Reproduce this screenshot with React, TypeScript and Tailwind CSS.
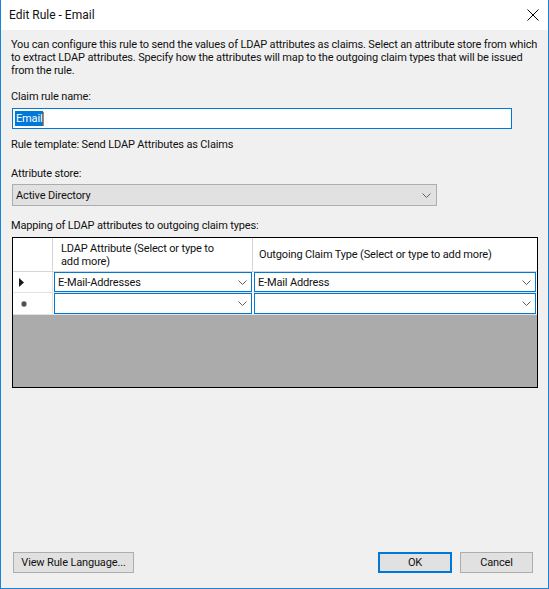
import React from 'react';

const Chevron = () => (
  <svg width="9" height="5" viewBox="0 0 9 5" className="shrink-0">
    <path d="M0.5 0.5 L4.5 4.5 L8.5 0.5" fill="none" stroke="#5f5f5f" strokeWidth="1" />
  </svg>
);

const ComboCell = ({ value }: { value: string }) => (
  <div className="w-full h-full border border-[#0078d7] bg-white flex items-center justify-between pl-[3px] pr-[4px]">
    <span>{value}</span>
    <Chevron />
  </div>
);

const Button = ({ label, primary, width }: { label: string; primary?: boolean; width: string }) => (
  <button
    className={`${width} h-[21px] bg-[#e1e1e1] flex items-center justify-center whitespace-nowrap ${
      primary ? 'border-2 border-[#0078d7]' : 'border border-[#adadad]'
    }`}
  >
    {label}
  </button>
);

export default function App() {
  return (
    <div
      className="w-[549px] h-[589px] bg-[#f0f0f0] border-x border-b border-[#1883d7] flex flex-col text-[11px] leading-[13px] tracking-[-0.15px] text-[#111]"
      style={{ fontFamily: 'Roboto, "Liberation Sans", Arial, sans-serif' }}
    >
      {/* Title bar */}
      <div className="h-[30px] bg-white flex items-center justify-between pl-[8px] pr-[9px] shrink-0">
        <span className="text-[12px] tracking-normal">Edit Rule - Email</span>
        <svg width="12" height="12" viewBox="0 0 12 12">
          <path d="M0.5 0.5 L11.5 11.5 M11.5 0.5 L0.5 11.5" stroke="#000" strokeWidth="1" />
        </svg>
      </div>

      <div className="flex flex-col flex-1 pl-[10px] pr-[10px]">
        <p className="mt-[8px] whitespace-nowrap">
          You can configure this rule to send the values of LDAP attributes as claims. Select an attribute store from which
          <br />
          to extract LDAP attributes. Specify how the attributes will map to the outgoing claim types that will be issued
          <br />
          from the rule.
        </p>

        <label className="mt-[13px]">Claim rule name:</label>
        <div className="mt-[5px] ml-[1px] w-[500px] h-[21px] border border-[#0078d7] bg-white flex items-center pl-[2px]">
          <span className="bg-[#0078d7] text-white px-px leading-[15px]">Email</span>
          <span className="w-px h-[14px] bg-[#e07a1f]" />
        </div>

        <p className="mt-[9px]">Rule template: Send LDAP Attributes as Claims</p>

        <label className="mt-[16px]">Attribute store:</label>
        <div className="mt-[4px] ml-[1px] w-[425px] h-[22px] border border-[#adadad] bg-[#e1e1e1] flex items-center justify-between pl-[3px] pr-[5px]">
          <span>Active Directory</span>
          <Chevron />
        </div>

        <label className="mt-[13px]">Mapping of LDAP attributes to outgoing claim types:</label>
        <div className="mt-[5px] ml-[1px] w-[526px] h-[151px] border border-black bg-[#ababab] flex flex-col">
          {/* header */}
          <div className="flex h-[34px] bg-white border-b border-[#d5d5d5]">
            <div className="w-[40px] border-r border-[#d5d5d5]" />
            <div className="w-[200px] border-r border-[#d5d5d5] pl-[8px] pt-[4px]">
              LDAP Attribute (Select or type to
              <br />
              add more)
            </div>
            <div className="flex-1 pl-[6px] flex items-center">Outgoing Claim Type (Select or type to add more)</div>
          </div>
          {/* row 1 */}
          <div className="flex h-[21px] bg-white border-b border-[#e3e3e3]">
            <div className="w-[40px] border-r border-[#e3e3e3] flex items-center pl-[6px]">
              <svg width="5" height="9" viewBox="0 0 5 9">
                <path d="M0 0 L5 4.5 L0 9 Z" fill="#1a1a1a" />
              </svg>
            </div>
            <div className="w-[200px] px-px">
              <ComboCell value="E-Mail-Addresses" />
            </div>
            <div className="flex-1 px-px">
              <ComboCell value="E-Mail Address" />
            </div>
          </div>
          {/* row 2 */}
          <div className="flex h-[22px] bg-white border-b border-[#e3e3e3]">
            <div className="w-[40px] border-r border-[#e3e3e3] flex items-center pl-[8px]">
              <svg width="6" height="6" viewBox="0 0 6 6">
                <path d="M3 0 L3 6 M0 3 L6 3 M0.8 0.8 L5.2 5.2 M5.2 0.8 L0.8 5.2" stroke="#444" strokeWidth="1.2" />
              </svg>
            </div>
            <div className="w-[200px] px-px">
              <ComboCell value="" />
            </div>
            <div className="flex-1 px-px">
              <ComboCell value="" />
            </div>
          </div>
        </div>

        <div className="flex items-center mt-auto mb-[15px] ml-[2px]">
          <Button label="View Rule Language..." width="w-[121px]" />
          <div className="flex-1" />
          <Button label="OK" primary width="w-[74px]" />
          <div className="w-[8px]" />
          <Button label="Cancel" width="w-[73px]" />
          <div className="w-[5px]" />
        </div>
      </div>
    </div>
  );
}
